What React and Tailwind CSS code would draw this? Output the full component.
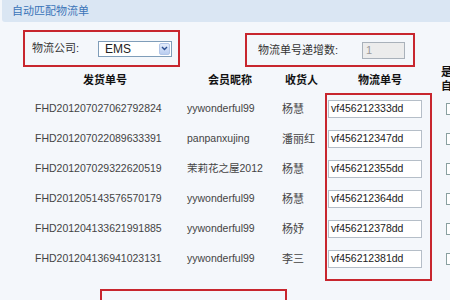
const rows = [
  { no: "FHD201207027062792824", nick: "yywonderful99", name: "杨慧", ship: "vf456212333dd" },
  { no: "FHD201207022089633391", nick: "panpanxujing", name: "潘丽红", ship: "vf456212347dd" },
  { no: "FHD201207029322620519", nick: "茉莉花之屋2012", name: "杨慧", ship: "vf456212355dd" },
  { no: "FHD201205143576570179", nick: "yywonderful99", name: "杨慧", ship: "vf456212364dd" },
  { no: "FHD201204133621991885", nick: "yywonderful99", name: "杨妤", ship: "vf456212378dd" },
  { no: "FHD201204136941023131", nick: "yywonderful99", name: "李三", ship: "vf456212381dd" }
];

const font = { fontFamily: '"Liberation Sans", "Noto Sans CJK SC", sans-serif' };

const App = () => {
  return (
    <div
      className="relative w-[450px] h-[300px] overflow-hidden bg-[#f4f7fb] text-[11px] text-[#3a3a3a]"
      style={font}
    >
      {/* title bar */}
      <div className="ml-[2px] h-[22px] bg-[#dae6f3] rounded-bl-[3px] flex items-center pl-[10px] text-[#3b74b8] text-[11px]">
        自动匹配物流单
      </div>

      {/* options */}
      <div className="h-[44px] flex items-start">
        <div className="shrink-0 ml-[23px] mt-[8px] w-[157px] h-[37px] border-2 border-[#c8262e] flex items-center pl-[7px]">
          <span className="w-[66px] text-[#333]">物流公司:</span>
          <div className="w-[74px] h-[16px] bg-white border border-[#7f9db9] flex items-center justify-between pl-[6px] pr-[1px]">
            <span className="text-[12px] text-[#222]">EMS</span>
            <span className="w-[11px] h-[12px] rounded-[2px] bg-gradient-to-b from-[#e3ecfb] to-[#b9cdf0] border border-[#b2c6e8] flex items-center justify-center">
              <svg width="7" height="5" viewBox="0 0 7 5">
                <polyline points="1,1 3.5,3.5 6,1" fill="none" stroke="#2a4d8f" strokeWidth="1.4" />
              </svg>
            </span>
          </div>
        </div>
        <div className="shrink-0 ml-[65px] mt-[11px] w-[170px] h-[34px] border-2 border-[#c8262e] flex items-center pl-[11px]">
          <span className="w-[104px] text-[#333]">物流单号递增数:</span>
          <div className="w-[43px] h-[17px] bg-[#ececec] border border-[#a9b1ba] flex items-center pl-[3px] text-[#9a9a9a]">
            1
          </div>
        </div>
      </div>

      {/* table header */}
      <div className="h-[28px] flex items-center font-bold text-[11px] text-[#111] whitespace-nowrap">
        <span className="shrink-0 ml-[83px] w-[125px]">发货单号</span>
        <span className="shrink-0 w-[77px]">会员昵称</span>
        <span className="shrink-0 w-[73px]">收货人</span>
        <span className="shrink-0 w-[83px]">物流单号</span>
        <span className="shrink-0 flex flex-col leading-[14px] -mt-[2px]">
          <span>是否</span>
          <span>自动</span>
        </span>
      </div>

      {/* rows */}
      {rows.map((r) => (
        <div key={r.no} className="h-[30px] flex items-center pl-[35px] text-[10.5px] text-[#444] whitespace-nowrap">
          <span className="shrink-0 w-[152px]">{r.no}</span>
          <span className="shrink-0 w-[95px]">{r.nick}</span>
          <span className="shrink-0 w-[46px] text-[11px]">{r.name}</span>
          <div className="shrink-0 w-[94px] h-[18px] bg-white border border-[#b5bec8] flex items-center pl-[2px] text-[#222]">
            {r.ship}
          </div>
          <span className="shrink-0 ml-[24px] w-[12px] h-[12px] bg-white border border-[#8aa0a0]" />
        </div>
      ))}

      {/* annotation boxes */}
      <div className="absolute left-[325px] top-[93px] w-[107px] h-[188px] border-2 border-[#c8262e]" />
      <div className="absolute left-[100px] top-[289px] w-[187px] h-[30px] border-2 border-[#c8262e]" />
    </div>
  );
};

export default App;
